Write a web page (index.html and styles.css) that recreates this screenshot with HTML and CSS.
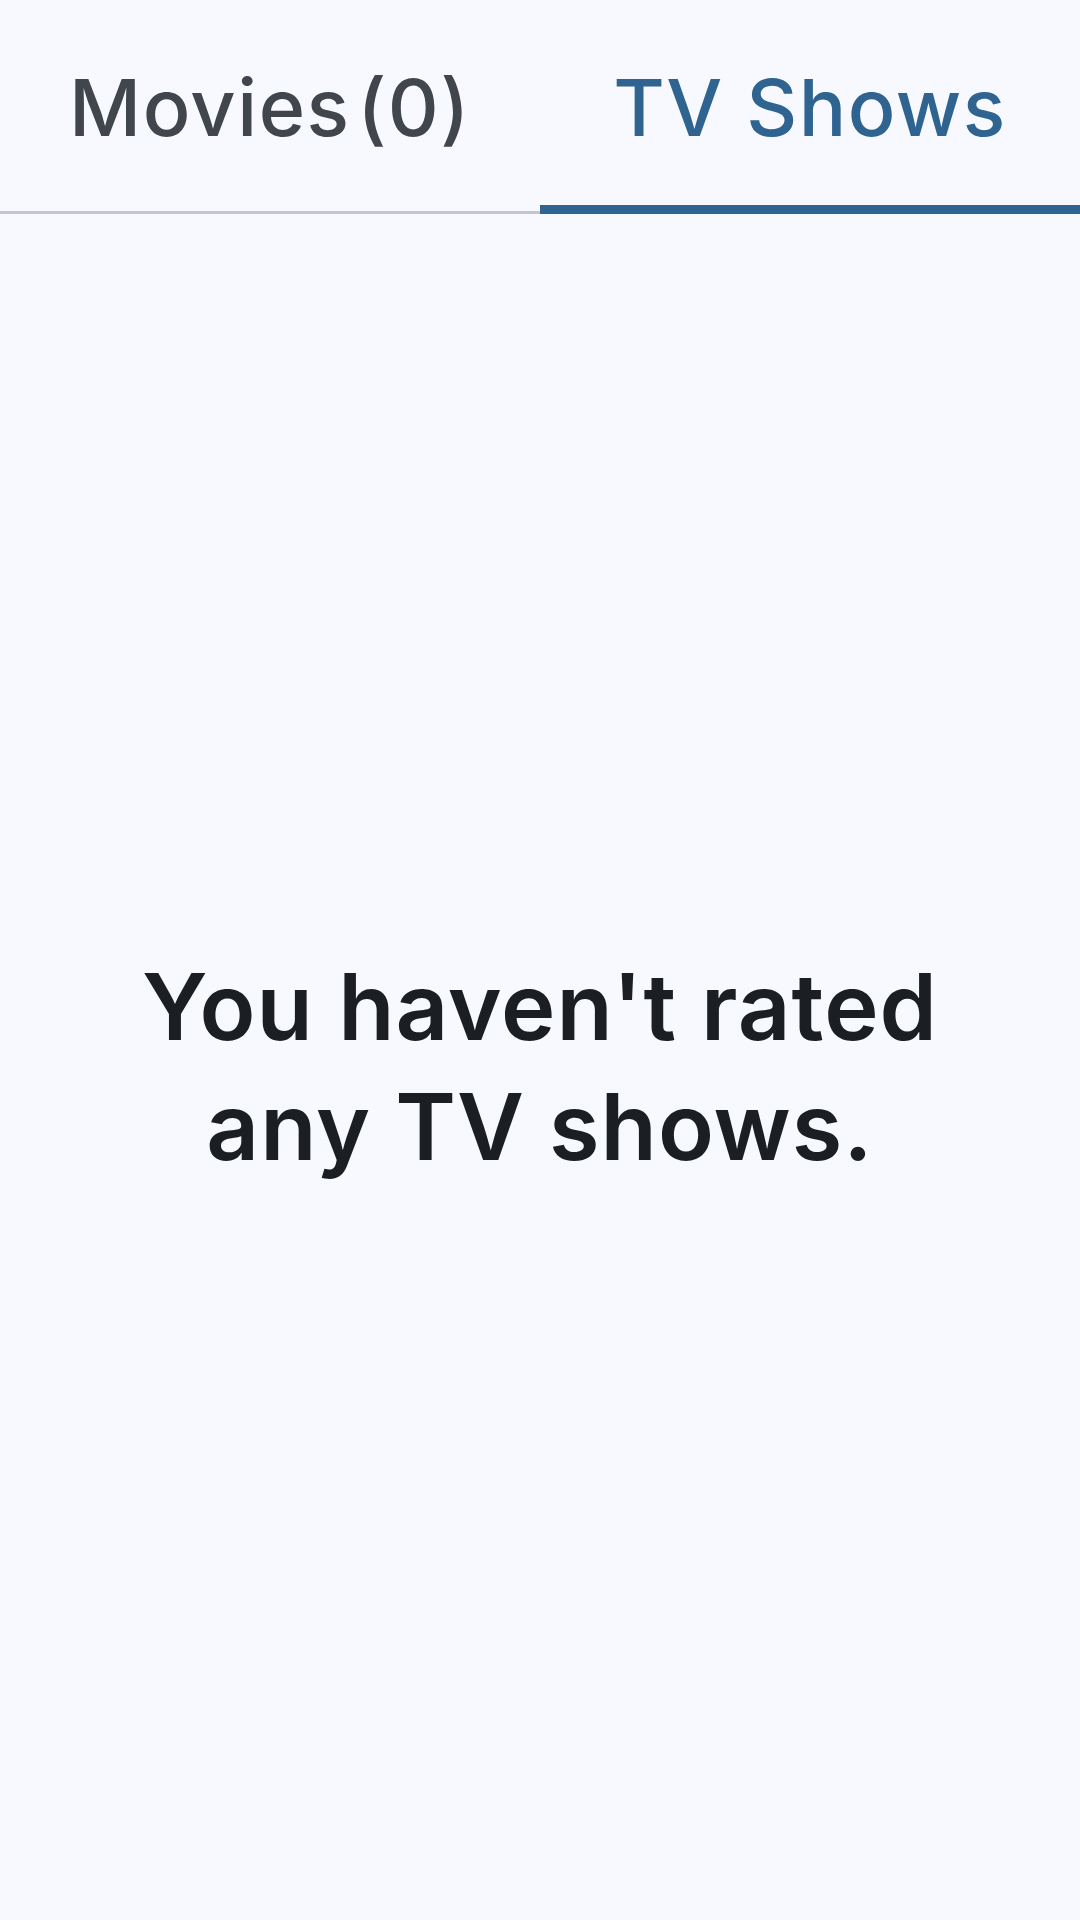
FILE: index.html
```html
<!DOCTYPE html>
<html lang="en">
<head>
<meta charset="utf-8">
<title>Ratings</title>
<link rel="stylesheet" href="styles.css">
</head>
<body>
<div class="screen">
  <nav class="tabs">
    <div class="tab tab-count">Movies (0)</div>
    <div class="tab tab-active">TV Shows</div>
  </nav>
  <main class="empty">
    <p class="empty-text">You haven't rated any TV shows.</p>
  </main>
</div>
</body>
</html>
```
FILE: styles.css
```css
html, body {
  margin: 0;
  padding: 0;
  background: #f7f9fe;
}
.screen {
  display: flex;
  flex-direction: column;
  width: 1080px;
  height: 1920px;
  font-family: Inter, "Liberation Sans", sans-serif;
}
.tabs {
  display: flex;
  border-bottom: 3px solid #c1c5cc;
}
.tab {
  flex: 1;
  box-sizing: border-box;
  height: 214px;
  margin-bottom: -3px;
  padding-top: 68px;
  text-align: center;
  font-size: 79px;
  line-height: 78px;
  font-weight: 500;
  color: #41464c;
  letter-spacing: 1.5px;
}
.tab-count {
  word-spacing: -16px;
}
.tab-active {
  color: #2f6390;
  border-bottom: 9px solid #2f6390;
}
.empty {
  flex: 1;
  display: flex;
  align-items: center;
  justify-content: center;
  padding: 0 100px;
}
.empty-text {
  margin: 0;
  text-align: center;
  font-size: 92px;
  line-height: 120px;
  font-weight: 600;
  color: #1b1e22;
  letter-spacing: 1px;
}
```
